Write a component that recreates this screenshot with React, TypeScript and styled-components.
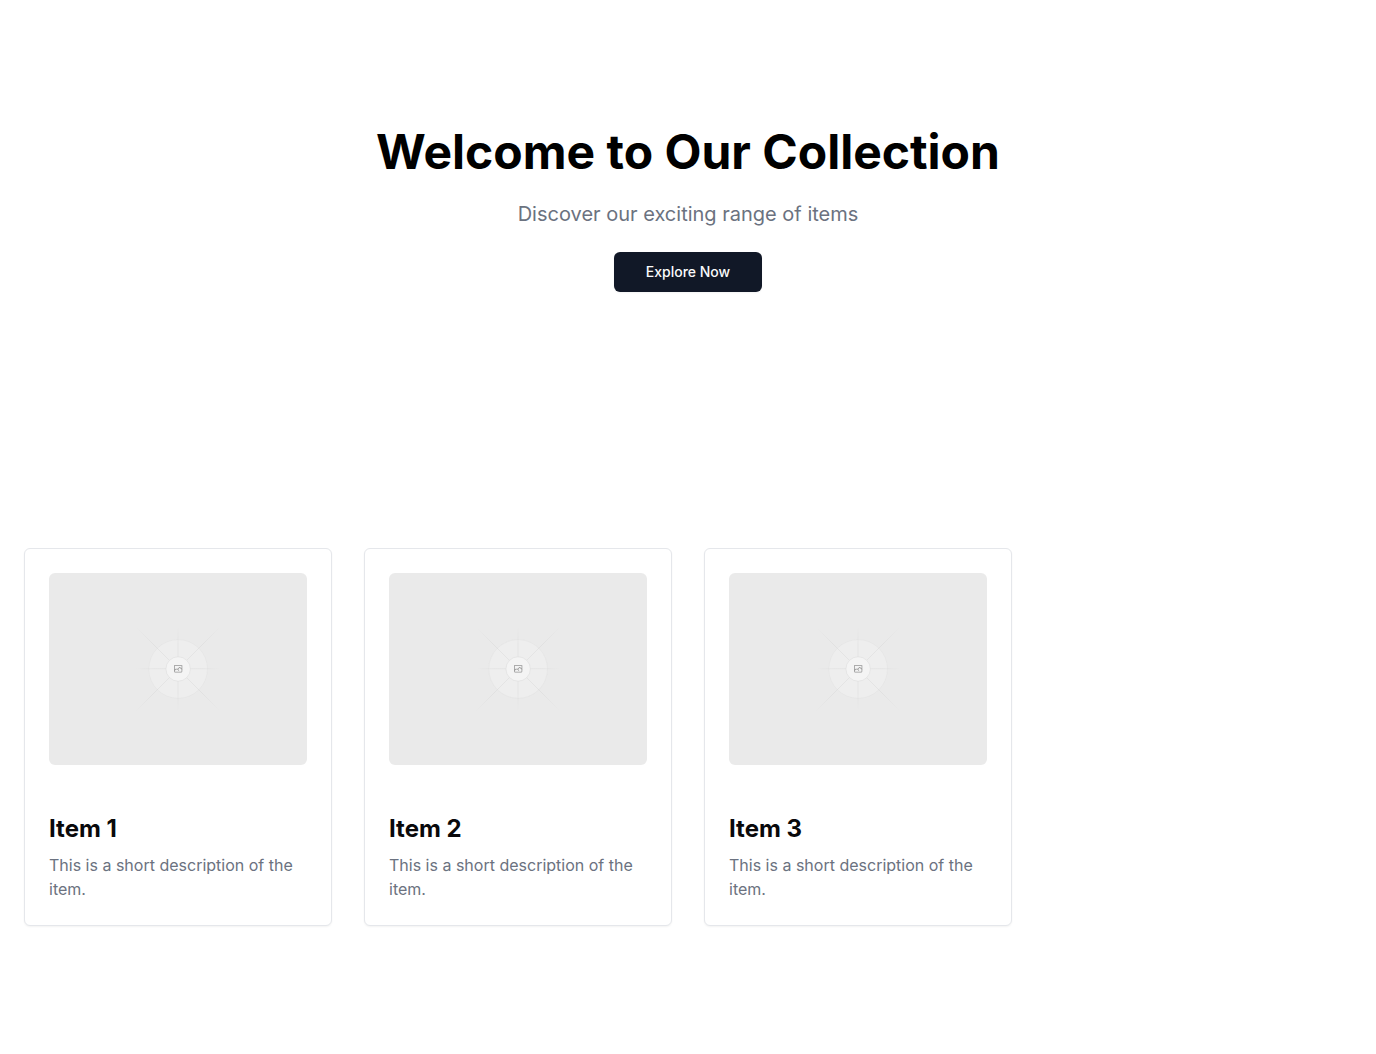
import React from 'react';
import styled, { createGlobalStyle } from 'styled-components';

const GlobalStyle = createGlobalStyle`
  *, *::before, *::after { box-sizing: border-box; }
  body {
    margin: 0;
    background: #fff;
    color: #000;
    font-family: Inter, "Liberation Sans", sans-serif;
    font-size: 16px;
    line-height: 24px;
  }
  h1, h2, p { margin: 0; }
`;

const Hero = styled.section`
  display: flex;
  flex-direction: column;
  align-items: center;
  gap: 24px;
  padding: 128px 24px;
  text-align: center;
`;

const HeroTitle = styled.h1`
  font-size: 48px;
  line-height: 48px;
  font-weight: 700;
`;

const HeroText = styled.p`
  font-size: 20px;
  line-height: 28px;
  color: #6b7280;
`;

const Button = styled.button`
  height: 40px;
  padding: 0 32px;
  border: 0;
  border-radius: 6px;
  background: #111827;
  color: #f9fafb;
  font: 500 14px/20px Inter, "Liberation Sans", sans-serif;
  box-shadow: 0 1px 2px rgba(0, 0, 0, 0.05);
  cursor: pointer;

  &:hover { background: #1f2937; }
`;

const Collection = styled.section`
  display: grid;
  grid-template-columns: 1fr;
  gap: 32px;
  padding: 128px 24px;

  @media (min-width: 640px) { grid-template-columns: repeat(2, 1fr); }
  @media (min-width: 1024px) { grid-template-columns: repeat(4, 1fr); }
`;

const Card = styled.article`
  display: flex;
  flex-direction: column;
  gap: 48px;
  padding: 24px;
  border: 1px solid #e5e7eb;
  border-radius: 6px;
  background: #fff;
  box-shadow: 0 1px 2px rgba(0, 0, 0, 0.05);
`;

const Picture = styled.svg`
  display: block;
  width: 100%;
  height: 192px;
  border-radius: 6px;
  background: #eaeaea;
`;

const CardBody = styled.div`
  display: flex;
  flex-direction: column;
  gap: 8px;
`;

const CardTitle = styled.h2`
  font-size: 24px;
  line-height: 32px;
  font-weight: 700;
  color: #09090b;
`;

const CardText = styled.p`
  color: #6b7280;
`;

function Placeholder({ id, label }: { id: string; label: string }) {
  const fade = `${id}-fade`;
  return (
    <Picture viewBox="0 0 1200 1200" preserveAspectRatio="xMidYMid slice" fill="none" role="img" aria-label={label}>
      <defs>
        <linearGradient id={fade} gradientUnits="userSpaceOnUse" x1="404" y1="600" x2="796" y2="600">
          <stop stopColor="#c9c9c9" stopOpacity="0" />
          <stop offset=".208" stopColor="#c9c9c9" />
          <stop offset=".792" stopColor="#c9c9c9" />
          <stop offset="1" stopColor="#c9c9c9" stopOpacity="0" />
        </linearGradient>
        <linearGradient id={`${fade}-long`} gradientUnits="userSpaceOnUse" x1="323" y1="600" x2="877" y2="600">
          <stop stopColor="#c9c9c9" stopOpacity="0" />
          <stop offset=".208" stopColor="#c9c9c9" />
          <stop offset=".792" stopColor="#c9c9c9" />
          <stop offset="1" stopColor="#c9c9c9" stopOpacity="0" />
        </linearGradient>
      </defs>
      <circle cx="600.7" cy="599.9" r="136.6" fill="#eeeeee" stroke="#e2e2e2" strokeWidth="2.418" />
      <g strokeWidth="2.418" strokeOpacity=".5">
        <path stroke={`url(#${fade})`} d="M404 598.7H796" />
        <path stroke={`url(#${fade})`} d="M404 600H796" transform="rotate(90 600 600)" />
        <path stroke={`url(#${fade}-long)`} d="M323 600H877" transform="rotate(45 600 600)" />
        <path stroke={`url(#${fade}-long)`} d="M323 600H877" transform="rotate(-45 600 600)" />
      </g>
      <circle cx="600.7" cy="599.9" r="56.8" fill="#f4f4f4" stroke="#dadada" strokeWidth="2.418" />
      <path
        fill="#666"
        fillOpacity=".65"
        fillRule="evenodd"
        d="M616.426 586.58h-31.434v16.176l3.553-3.554.531-.531h9.068l.074-.074 8.463-8.463h2.565l7.18 7.181V586.58Zm-15.715 14.654 3.698 3.699 1.283 1.282-2.565 2.565-1.282-1.283-5.2-5.199h-6.066l-5.514 5.514-.073.073v2.876a2.418 2.418 0 0 0 2.418 2.418h26.598a2.418 2.418 0 0 0 2.418-2.418v-8.317l-8.463-8.463-7.181 7.181-.071.072Zm-19.347 5.442v4.085a6.045 6.045 0 0 0 6.046 6.045h26.598a6.044 6.044 0 0 0 6.045-6.045v-7.108l1.356-1.355-1.282-1.283-.074-.073v-17.989h-38.689v23.43l-.146.146.146.147Z"
      />
    </Picture>
  );
}

const items = [1, 2, 3].map((n) => ({
  id: `item-${n}`,
  title: `Item ${n}`,
  text: 'This is a short description of the item.',
}));

export default function App() {
  return (
    <>
      <GlobalStyle />
      <main>
        <Hero>
          <HeroTitle>Welcome to Our Collection</HeroTitle>
          <HeroText>Discover our exciting range of items</HeroText>
          <Button type="button">Explore Now</Button>
        </Hero>
        <Collection>
          {items.map((item) => (
            <Card key={item.id}>
              <Placeholder id={item.id} label={item.title} />
              <CardBody>
                <CardTitle>{item.title}</CardTitle>
                <CardText>{item.text}</CardText>
              </CardBody>
            </Card>
          ))}
        </Collection>
      </main>
    </>
  );
}
